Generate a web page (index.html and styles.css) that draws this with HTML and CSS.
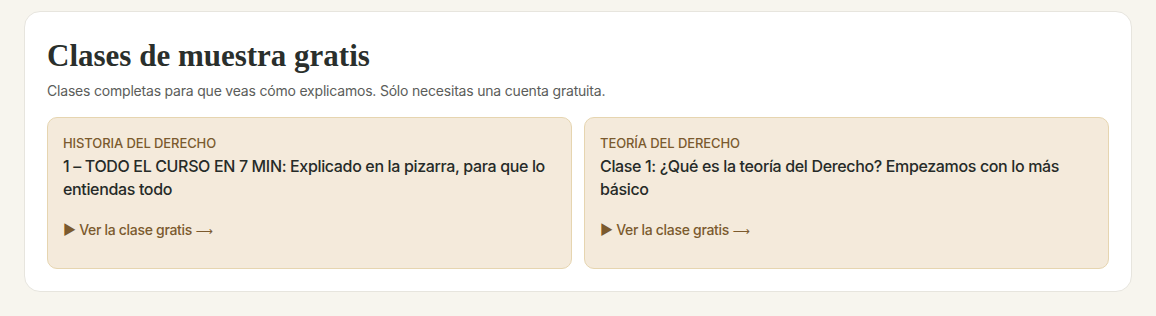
FILE: index.html
```html
<!DOCTYPE html>
<html lang="es">
<head>
<meta charset="UTF-8">
<meta name="viewport" content="width=device-width, initial-scale=1.0">
<title>Clases de muestra gratis</title>
<link rel="stylesheet" href="styles.css">
</head>
<body>

<section class="samples">
    <h2>Clases de muestra gratis</h2>
    <p class="lead">Clases completas para que veas cómo explicamos. Sólo necesitas una cuenta gratuita.</p>

    <div class="sample-grid">
        <a class="sample-card" href="#">
            <span class="sample-course">Historia del Derecho</span>
            <span class="sample-title">1 – TODO EL CURSO EN 7 MIN: Explicado en la pizarra, para que lo entiendas todo</span>
            <span class="sample-link">&#9654; Ver la clase gratis <span class="arrow">&#10230;</span></span>
        </a>
        <a class="sample-card" href="#">
            <span class="sample-course">Teoría del Derecho</span>
            <span class="sample-title">Clase 1: ¿Qué es la teoría del Derecho? Empezamos con lo más básico</span>
            <span class="sample-link">&#9654; Ver la clase gratis <span class="arrow">&#10230;</span></span>
        </a>
    </div>
</section>

</body>
</html>
```

FILE: styles.css
```css
body {
    font-family: Inter, "Open Sans", sans-serif;
    margin: 0;
    padding: 11px 24px 24px;
    background-color: #f7f5ee;
    color: #2a2f2c;
}
.samples {
    background-color: #fff;
    border: 1px solid #e7e5de;
    border-radius: 16px;
    padding: 25px 22px 22px;
}
.samples h2 {
    font-family: "Liberation Serif", "DejaVu Serif", serif;
    font-size: 31px;
    font-weight: bold;
    line-height: 38px;
    margin: 0;
    color: #2a2f2c;
}
.lead {
    font-size: 14px;
    line-height: 20px;
    letter-spacing: -0.2px;
    color: #5b5d5a;
    margin: 6px 0 16px;
}
.sample-grid {
    display: grid;
    grid-template-columns: 1fr 1fr;
    gap: 12px;
}
.sample-card {
    display: flex;
    flex-direction: column;
    padding: 16px 15px 27px;
    background-color: #f4eadb;
    border: 1px solid #e6d5b0;
    border-radius: 10px;
    text-decoration: none;
    color: #2a2f2c;
}
.sample-course {
    font-size: 13px;
    line-height: 18px;
    font-weight: 500;
    letter-spacing: -0.1px;
    text-transform: uppercase;
    color: #7b5a2e;
}
.sample-title {
    font-size: 16px;
    line-height: 23px;
    font-weight: 500;
    letter-spacing: -0.35px;
    margin-top: 3px;
    color: #262b28;
}
.sample-link {
    margin-top: 19px;
    font-size: 14px;
    line-height: 20px;
    font-weight: 500;
    letter-spacing: -0.3px;
    color: #7b5a2e;
}
.arrow {
    font-family: "DejaVu Sans", sans-serif;
    font-size: 12px;
    letter-spacing: 0;
}
```
